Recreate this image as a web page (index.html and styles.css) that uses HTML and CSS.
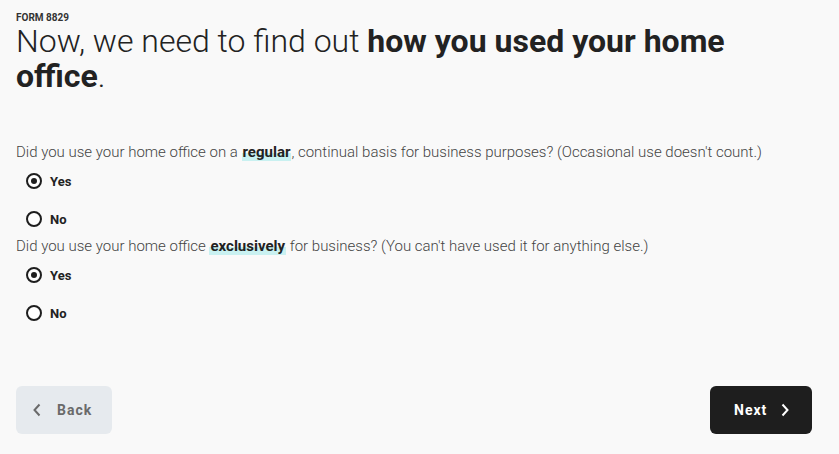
FILE: index.html
```html
<!DOCTYPE html>
<html lang="en">
<head>
  <meta charset="UTF-8" />
  <title>Form 8829 - Home office use</title>
  <link rel="stylesheet" href="styles.css">
</head>
<body>
  <div class="page">
    <div class="form-label">FORM 8829</div>
    <h1 class="title">Now, we need to find out <b>how you used your home office</b>.</h1>

    <div class="questions">
      <div class="question">
        <p class="question-text">Did you use your home office on a <mark>regular</mark>, continual basis for business purposes? (Occasional use doesn't count.)</p>
        <div class="options">
          <label class="option"><input type="radio" name="regular" checked><span>Yes</span></label>
          <label class="option"><input type="radio" name="regular"><span>No</span></label>
        </div>
      </div>

      <div class="question">
        <p class="question-text">Did you use your home office <mark>exclusively</mark> for business? (You can't have used it for anything else.)</p>
        <div class="options">
          <label class="option"><input type="radio" name="exclusive" checked><span>Yes</span></label>
          <label class="option"><input type="radio" name="exclusive"><span>No</span></label>
        </div>
      </div>
    </div>

    <div class="nav">
      <button class="btn btn-back" type="button">
        <svg width="10" height="14" viewBox="0 0 10 14"><path d="M7.5 1.5 L2.5 7 L7.5 12.5" fill="none" stroke="currentColor" stroke-width="2"/></svg>
        Back
      </button>
      <button class="btn btn-next" type="button">
        Next
        <svg width="10" height="14" viewBox="0 0 10 14"><path d="M2.5 1.5 L7.5 7 L2.5 12.5" fill="none" stroke="currentColor" stroke-width="2"/></svg>
      </button>
    </div>
  </div>
</body>
</html>
```

FILE: styles.css
```css
body {
  margin: 0;
  background: #f9f9f9;
  color: #222;
  font-family: Roboto, "Liberation Sans", Arial, sans-serif;
}
.page {
  padding: 12px 27px 20px 16px;
}
.form-label {
  font-size: 10px;
  line-height: 12px;
  font-weight: 700;
  color: #333;
}
.title {
  margin: 0;
  font-size: 32px;
  line-height: 35px;
  font-weight: 300;
  color: #222;
  max-width: 760px;
}
.title b {
  font-weight: 700;
}
.questions {
  margin-top: 48px;
}
.question + .question {
  margin-top: 5px;
}
.question-text {
  margin: 0;
  font-size: 15px;
  line-height: 20px;
  font-weight: 300;
  color: #444;
}
.question-text mark {
  color: #222;
  font-weight: 700;
  background: linear-gradient(transparent 55%, #c9f1f1 55%);
  padding: 0 1px;
}
.options {
  margin-top: 7px;
  display: flex;
  flex-direction: column;
  gap: 14px;
}
.option {
  display: flex;
  align-items: center;
  gap: 8px;
  height: 24px;
  padding-left: 10px;
  font-size: 13px;
  font-weight: 700;
  color: #222;
}
.option input {
  appearance: none;
  margin: 0;
  width: 16px;
  height: 16px;
  border: 2px solid #1e1e1e;
  border-radius: 50%;
  display: grid;
  place-items: center;
  background: #fff;
}
.option input:checked::before {
  content: "";
  width: 6px;
  height: 6px;
  border-radius: 50%;
  background: #1e1e1e;
}
.nav {
  margin-top: 61px;
  display: flex;
  justify-content: space-between;
}
.btn {
  height: 48px;
  border: none;
  border-radius: 6px;
  display: flex;
  align-items: center;
  font-family: inherit;
  font-size: 14px;
  font-weight: 700;
  letter-spacing: 1px;
  cursor: pointer;
}
.btn-back {
  background: #e6eaee;
  color: #6a6a6a;
  padding: 0 18px 0 16px;
  gap: 15px;
  width: 96px;
}
.btn-next {
  background: #1e1e1e;
  color: #fff;
  padding: 0 21px 0 24px;
  gap: 13px;
  width: 102px;
}
```
